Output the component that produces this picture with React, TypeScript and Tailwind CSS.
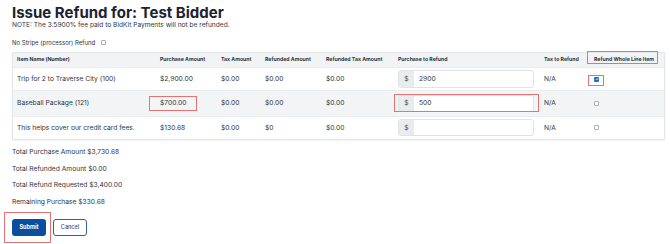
import React from "react";

const cols = "grid grid-cols-[142px_61px_44px_61px_72px_146px_50px_1fr] items-center";

function Check({ checked }: { checked?: boolean }) {
  if (checked) {
    return (
      <span className="flex w-[5px] h-[5px] items-center justify-center rounded-[1px] bg-[#1f6fd1]">
        <svg width="4" height="4" viewBox="0 0 4 4">
          <path d="M0.8 2.1 L1.7 3 L3.3 1" stroke="white" strokeWidth="0.7" fill="none" />
        </svg>
      </span>
    );
  }
  return <span className="block w-[5px] h-[5px] rounded-[1px] border border-[#a9afb7] bg-white" />;
}

function MoneyInput({ value }: { value: string }) {
  return (
    <div className="flex w-[136px] h-[17.5px] rounded-[3px] border border-[#dfe3e8] bg-white overflow-hidden">
      <div className="w-[15px] flex items-center justify-center bg-[#e9ecef] text-[6.7px] text-[#444]">$</div>
      <div className="flex items-center pl-[5px] text-[6.7px] text-[#333]">{value}</div>
    </div>
  );
}

function RedBox({ className }: { className: string }) {
  return <span className={"absolute border border-[#e57373] pointer-events-none " + className} />;
}

export default function App() {
  const body = "text-[6.7px] text-[#2d3440]";
  return (
    <div className="w-[670px] h-[244px] overflow-hidden flex flex-col bg-white px-[12px] pt-[4px] font-['Inter',sans-serif] text-[#2d3440]">
      <h1 className="text-[15px] leading-[17px] font-bold text-[#1b2230]">
        Issue Refund for: Test Bidder
      </h1>
      <p className="text-[6.6px] leading-[8px] text-[#2d3440]">
        NOTE: The 3.5900% fee paid to BidKit Payments will not be refunded.
      </p>
      <div className="mt-[9px] flex items-center h-[8px] text-[6px] text-[#2d3440]">
        <span>No Stripe (processor) Refund</span>
        <span className="ml-[6px]">
          <Check />
        </span>
      </div>

      <div className="mt-[6px] w-[653px] border border-[#e3e6ea] shadow-[0_1px_2px_rgba(0,0,0,0.06)]">
        <div className={cols + " h-[14px] bg-[#f1f3f5] text-[5.2px] font-bold text-[#2d3440]"}>
          <div className="pl-[4px]">Item Name (Number)</div>
          <div className="pl-[5px]">Purchase Amount</div>
          <div className="pl-[5px]">Tax Amount</div>
          <div className="pl-[5px]">Refunded Amount</div>
          <div className="pl-[5px]">Refunded Tax Amount</div>
          <div className="pl-[5px]">Purchase to Refund</div>
          <div className="pl-[5px]">Tax to Refund</div>
          <div className="pl-[5px]">
            <span className="relative">
              Refund Whole Line Item
              <RedBox className="-left-[7px] -right-[4px] -top-[5px] -bottom-[2px]" />
            </span>
          </div>
        </div>

        <div className={cols + " h-[23.3px] bg-white border-t border-[#e9ecef] " + body}>
          <div className="pl-[4px]">Trip for 2 to Traverse City (100)</div>
          <div className="pl-[5px]">$2,900.00</div>
          <div className="pl-[5px]">$0.00</div>
          <div className="pl-[5px]">$0.00</div>
          <div className="pl-[5px]">$0.00</div>
          <div className="pl-[5px]">
            <MoneyInput value="2900" />
          </div>
          <div className="pl-[5px]">N/A</div>
          <div className="pl-[5px]">
            <span className="relative block w-[5px]">
              <Check checked />
              <RedBox className="-left-[6px] -right-[4.5px] -top-[2px] -bottom-[4.5px]" />
            </span>
          </div>
        </div>

        <div className={cols + " h-[25.4px] bg-[#f3f4f6] border-t border-[#e9ecef] " + body}>
          <div className="pl-[4px]">Baseball Package (121)</div>
          <div className="pl-[5px]">
            <span className="relative">
              $700.00
              <RedBox className="-left-[11px] -right-[10.5px] -top-[3.5px] -bottom-[3.5px]" />
            </span>
          </div>
          <div className="pl-[5px]">$0.00</div>
          <div className="pl-[5px]">$0.00</div>
          <div className="pl-[5px]">$0.00</div>
          <div className="pl-[5px]">
            <div className="relative w-[136px]">
              <MoneyInput value="500" />
              <RedBox className="-left-[4px] -right-[4.5px] -top-[0.5px] -bottom-[0px]" />
            </div>
          </div>
          <div className="pl-[5px]">N/A</div>
          <div className="pl-[5px]">
            <Check />
          </div>
        </div>

        <div className={cols + " h-[23px] bg-white border-t border-[#e9ecef] " + body}>
          <div className="pl-[4px]">This helps cover our credit card fees.</div>
          <div className="pl-[5px]">$130.68</div>
          <div className="pl-[5px]">$0.00</div>
          <div className="pl-[5px]">$0</div>
          <div className="pl-[5px]">$0.00</div>
          <div className="pl-[5px]">
            <MoneyInput value="" />
          </div>
          <div className="pl-[5px]">N/A</div>
          <div className="pl-[5px]">
            <Check />
          </div>
        </div>
      </div>

      <div className="mt-[8.5px] flex flex-col gap-[8.5px] text-[6.7px] leading-[8px] text-[#2d3440]">
        <div>Total Purchase Amount $3,730.68</div>
        <div>Total Refunded Amount $0.00</div>
        <div>Total Refund Requested $3,400.00</div>
        <div>Remaining Purchase $330.68</div>
      </div>

      <div className="mt-auto mb-[8px] flex gap-[7px]">
        <div className="relative">
          <button className="w-[34px] h-[17px] rounded-[3px] bg-[#0a4f9e] text-white text-[5.5px] font-bold flex items-center justify-center">
            Submit
          </button>
          <RedBox className="-left-[8px] -right-[5px] -top-[7.5px] -bottom-[6.5px]" />
        </div>
        <button className="w-[34px] h-[17px] rounded-[3px] border border-[#2c62a8] bg-white text-[#1f5597] text-[5.5px] font-medium flex items-center justify-center">
          Cancel
        </button>
      </div>
    </div>
  );
}
